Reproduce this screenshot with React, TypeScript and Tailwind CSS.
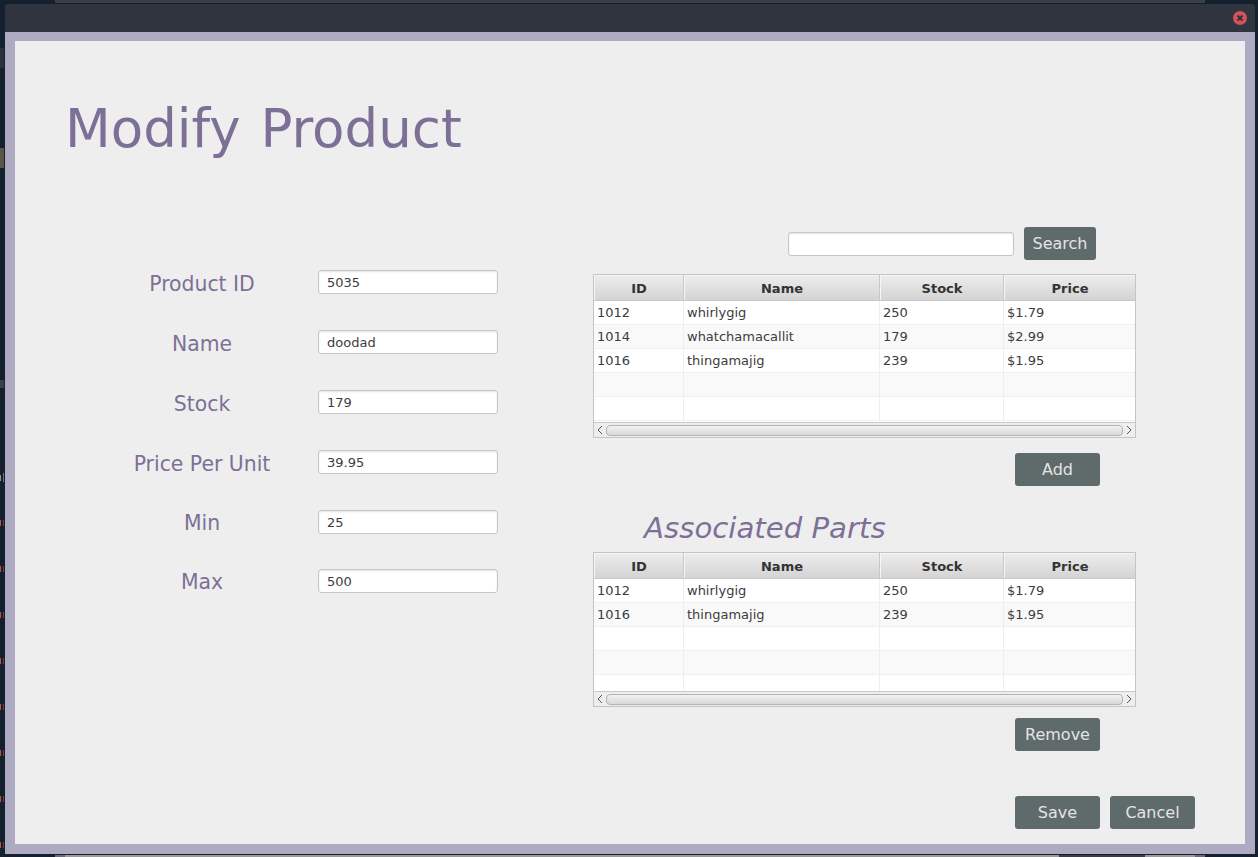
import React from 'react';

type Row = { id: string; name: string; stock: string; price: string };

const PARTS: Row[] = [
  { id: '1012', name: 'whirlygig', stock: '250', price: '$1.79' },
  { id: '1014', name: 'whatchamacallit', stock: '179', price: '$2.99' },
  { id: '1016', name: 'thingamajig', stock: '239', price: '$1.95' },
];

const ASSOCIATED: Row[] = [PARTS[0], PARTS[2]];

const FIELDS = [
  { label: 'Product ID', value: '5035', mt: 'mt-0', drop: 'pt-[2px]' },
  { label: 'Name', value: 'doodad', mt: 'mt-[36px]', drop: 'pt-[2px]' },
  { label: 'Stock', value: '179', mt: 'mt-[36px]', drop: 'pt-[2px]' },
  { label: 'Price Per Unit', value: '39.95', mt: 'mt-[36px]', drop: 'pt-[2px]' },
  { label: 'Min', value: '25', mt: 'mt-[36px]', drop: 'pt-[1px]' },
  { label: 'Max', value: '500', mt: 'mt-[35px]', drop: 'pt-[1px]' },
];

const FONT = 'font-["DejaVu_Sans",sans-serif]';

const ActionButton = ({ label, className = '' }: { label: string; className?: string }) => (
  <button className={`h-[33px] rounded-[3px] bg-[#5f6a6a] text-[16px] text-[#e4e4e4] ${className}`}>{label}</button>
);

const HeaderCell = ({ label, className }: { label: string; className: string }) => (
  <div className={`flex h-full items-center justify-center border-r border-[#c8c8c8] bg-gradient-to-b from-[#ededed] to-[#d4d4d4] pl-[1px] pt-[2px] text-[13px] font-bold text-[#333333] shadow-[inset_1px_1px_0_#f6f6f6] ${className}`}>
    {label}
  </div>
);

const DataTable = ({ rows, height }: { rows: Row[]; height: string }) => {
  const blanks = 5 - rows.length;
  const all: (Row | null)[] = [...rows, ...Array(blanks).fill(null)];
  return (
    <div className={`flex w-[543px] flex-col overflow-hidden border border-[#c4c4c4] bg-white ${height}`}>
      <div className="flex h-[26px] shrink-0 border-b border-[#c8c8c8]">
        <HeaderCell label="ID" className="w-[90px]" />
        <HeaderCell label="Name" className="w-[196px]" />
        <HeaderCell label="Stock" className="w-[124px]" />
        <HeaderCell label="Price" className="flex-1 border-r-0" />
      </div>
      <div className="min-h-0 flex-1 overflow-hidden">
        {all.map((row, i) => (
          <div key={i} className={`flex h-[24px] border-b border-[#f0f0f0] text-[13px] leading-[23px] text-[#3c3c3c] ${i % 2 === 0 ? 'bg-white' : 'bg-[#f9f9f9]'}`}>
            <div className="w-[90px] border-r border-[#eeeeee] pl-[3px]">{row?.id}</div>
            <div className="w-[196px] border-r border-[#eeeeee] pl-[3px]">{row?.name}</div>
            <div className="w-[124px] border-r border-[#eeeeee] pl-[3px]">{row?.stock}</div>
            <div className="flex-1 pl-[3px]">{row?.price}</div>
          </div>
        ))}
      </div>
      <div className="flex h-[15px] shrink-0 items-center justify-between border-t border-[#c8c8c8] bg-[#eeeeee] px-[2px]">
        <svg width="8" height="10" viewBox="0 0 8 10" className="shrink-0"><path d="M6 1 2 5l4 4" fill="none" stroke="#555555" strokeWidth="1" /></svg>
        <div className="mx-[2px] h-[11px] flex-1 rounded-[4px] border border-[#b4b4b4] bg-gradient-to-b from-[#f2f2f2] to-[#d8d8d8]" />
        <svg width="8" height="10" viewBox="0 0 8 10" className="shrink-0"><path d="m2 1 4 4-4 4" fill="none" stroke="#555555" strokeWidth="1" /></svg>
      </div>
    </div>
  );
};

const Field = ({ label, value, mt, drop }: { label: string; value: string; mt: string; drop: string }) => (
  <div className={`flex items-start ${mt}`}>
    <div className={`ml-[100px] h-[24px] w-[174px] whitespace-nowrap text-center text-[20.4px] leading-[24px] text-[#7d7097] ${drop}`}>{label}</div>
    <div className="ml-[29px] flex h-[24px] w-[180px] items-center rounded-[3px] border border-[#c6c6c6] bg-white pl-[8px] pt-[2px] text-[13px] text-[#3c3c3c] shadow-[inset_0_1px_2px_#e4e4e4]">
      {value}
    </div>
  </div>
);

export default function App() {
  return (
    <div className={`relative h-[857px] w-[1258px] overflow-hidden bg-[#15202e] ${FONT}`}>
      {/* bits of the app behind the dialog */}
      <div className="absolute left-[55px] top-0 h-[3px] w-[1150px] bg-[#3a3f4b]" />
      <div className="absolute bottom-0 left-[55px] flex h-[2px] w-[1150px]">
        <div className="w-[10px] bg-[#6b6b78]" />
        <div className="w-[994px] bg-[#9a9a9a]" />
        <div className="w-[86px] bg-[#3a3d42]" />
        <div className="w-[50px] bg-[#9a9a9a]" />
        <div className="w-[10px] bg-[#6b6b78]" />
      </div>
      <div className="absolute left-0 top-[48px] h-[20px] w-[4px] bg-[#2a303c]" />
      <div className="absolute left-0 top-[148px] h-[20px] w-[4px] bg-[#5a5648]" />
      <div className="absolute left-0 top-[380px] h-[8px] w-[4px] bg-[#3a3f4b]" />
      <div className="absolute left-0 top-[475px] h-[6px] w-[1px] bg-[#c98a3a]" />
      <div className="absolute left-[3px] top-[473px] h-[9px] w-[1px] bg-[#3f7fc0]" />
      {[523, 569, 615, 661, 707, 753, 799, 845].map(y => (
        <React.Fragment key={y}>
          <div className="absolute left-0 h-[6px] w-[1px] bg-[#d0512f]" style={{ top: y - 3 }} />
          <div className="absolute left-[3px] h-[6px] w-[1px] bg-[#5a4a50]" style={{ top: y - 3 }} />
        </React.Fragment>
      ))}

      <div className="relative ml-[5px] mt-[4px] flex h-[850px] w-[1250px] flex-col">
        {/* title bar */}
        <div className="flex h-[28px] shrink-0 items-center justify-end rounded-t-[3px] bg-[#2f343f] pr-[8px]">
          <svg width="14" height="14" viewBox="0 0 14 14">
            <circle cx="7" cy="7" r="7" fill="#d2525e" />
            <path d="M4.5 4.5l5 5M9.5 4.5l-5 5" stroke="#2f343f" strokeWidth="2" />
          </svg>
        </div>

        <div className="flex-1 border-x-[10px] border-b-[10px] border-t-[9px] border-[#aeaac1] bg-[#eeeeee]">
          <div className="flex h-full flex-col">
            <h1 className="ml-[50px] mt-[53px] h-[68px] text-[53px] leading-[70px] text-[#7d7097] [word-spacing:3px]">Modify Product</h1>

            <div className="flex flex-1">
              {/* form column */}
              <div className="mt-[108px] w-[578px]">
                {FIELDS.map(f => (
                  <Field key={f.label} label={f.label} value={f.value} mt={f.mt} drop={f.drop} />
                ))}
              </div>

              {/* tables column */}
              <div className="flex flex-col">
                <div className="mt-[65px] flex w-[503px] items-center justify-end gap-[10px]">
                  <div className="h-[24px] w-[226px] rounded-[3px] border border-[#c6c6c6] bg-white shadow-[inset_0_1px_2px_#e4e4e4]" />
                  <ActionButton label="Search" className="w-[72px]" />
                </div>
                <div className="mt-[14px]">
                  <DataTable rows={PARTS} height="h-[164px]" />
                </div>
                <div className="mt-[15px] flex w-[507px] justify-end">
                  <ActionButton label="Add" className="w-[85px]" />
                </div>
                <div className="ml-[51px] mt-[24px] h-[42px] text-[29.2px] italic leading-[36px] text-[#7d7097]">Associated Parts</div>
                <DataTable rows={ASSOCIATED} height="h-[155px]" />
                <div className="mt-[11px] flex w-[507px] justify-end">
                  <ActionButton label="Remove" className="w-[85px]" />
                </div>
                <div className="mt-[45px] flex w-[602px] justify-end gap-[10px]">
                  <ActionButton label="Save" className="w-[85px]" />
                  <ActionButton label="Cancel" className="w-[85px]" />
                </div>
              </div>
            </div>
          </div>
        </div>
      </div>
    </div>
  );
}
